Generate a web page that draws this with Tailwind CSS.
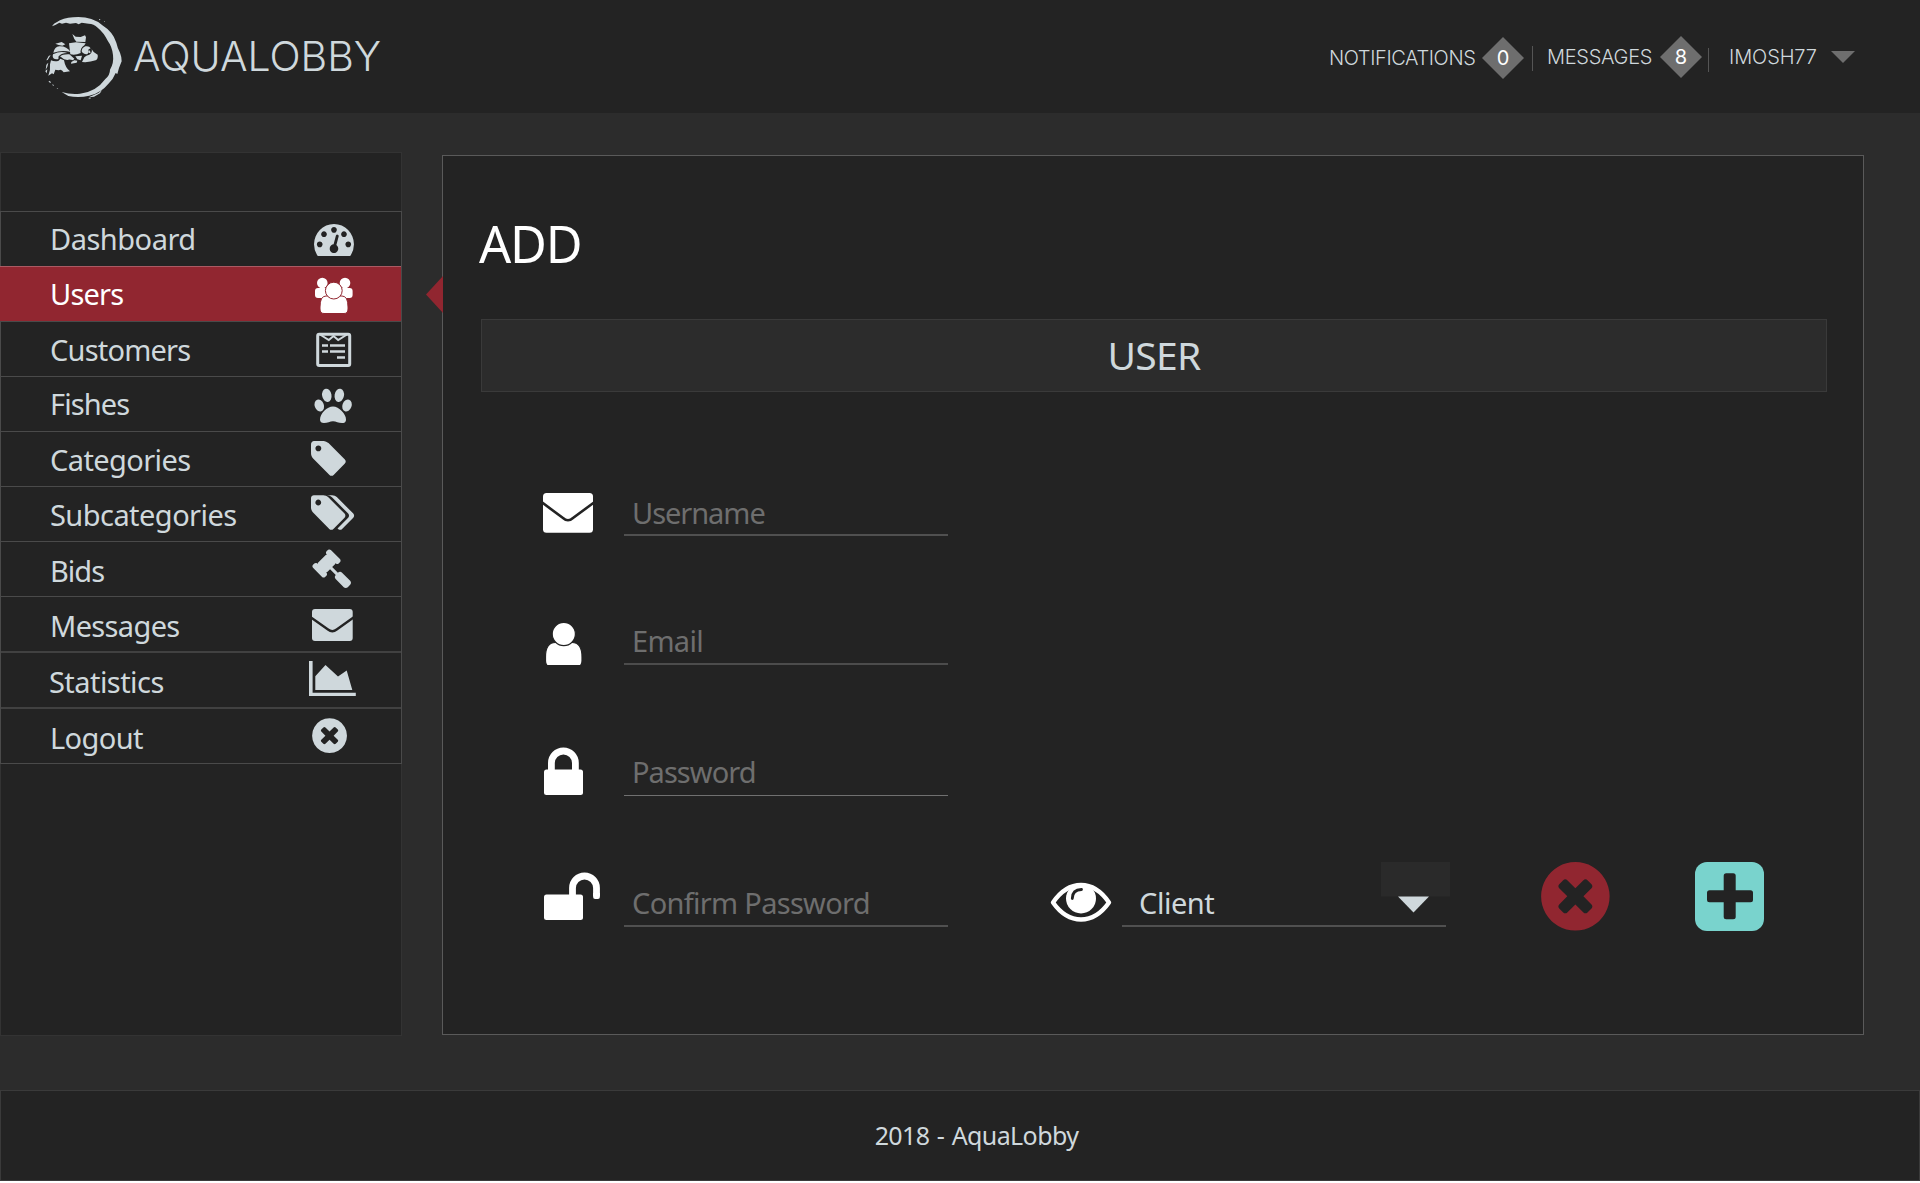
<!DOCTYPE html>
<html lang="en">
<head>
<meta charset="utf-8">
<title>AquaLobby</title>
<script src="https://cdn.jsdelivr.net/npm/@tailwindcss/browser@4"></script>
</head>
<body class="bg-white font-['Noto_Sans',sans-serif] text-[#cfd8dc]">
<div class="flex h-[1181px] w-[1920px] flex-col bg-[#2c2c2c]">

  <header class="flex h-[113px] shrink-0 items-center bg-[#232323] pl-[30px] font-['Inter',sans-serif]">
    <svg class="mt-0.5 h-[95px] w-[100px] shrink-0" viewBox="0 0 300 285" fill="#cfd8dc">
      <path d="M66 49L72 41L90 31Q112 21 145 21Q166 21 184 27Q203 33 217 46Q249 66 259 98Q263 116 270 128Q275 140 275 154L267 174L262 192L257 189Q249 208 238 218Q212 250 178 257Q146 265 115 258L95 246Q122 254 150 251Q198 246 226 207Q240 195 240 179Q252 160 249 135Q246 110 234 94Q222 68 203 53Q191 41 176 41L155 38L146 43L138 39L120 41L108 38L96 41L88 38L76 45Z"/>
      <path d="M176 262L205 249L216 240L210 250L192 260ZM174 264l10-1-4 3zM57 212l6 4-2 3-5-4zM67 222l5 4-3 2zM80 234l5 2-3 1zM208 27l3 1-1 3-3-2zM222 33l3 1-2 2z"/>
      <path d="M127 72L137 80L152 81L165 76L168 82L166 96L139 95L133 87Z"/>
      <path d="M117 100L138 97L167 100L163 106Q150 114 152 129Q136 137 121 133Z"/>
      <path d="M166 109Q155 114 155 124Q158 132 170 133Q176 132 174 124Q174 117 182 115Q178 107 166 109ZM185 118L191 126L203 134Q205 146 197 151Q178 158 156 156L163 142Q168 136 178 134Q188 128 185 118ZM178 121a4 4 0 1 0 4 6z"/>
      <path d="M76 101L95 96L106 103L97 107L86 105ZM70 128Q74 110 88 109Q110 108 122 126Q96 119 70 128ZM69 133Q92 121 112 129Q92 130 85 140Q88 149 79 148Q69 148 68 138ZM90 139Q98 132 118 133L133 146L129 151Q118 147 112 150L102 148ZM136 139L156 137L152 151L142 148ZM124 156L133 151L142 152L140 158L123 161Z"/>
      <path d="M63 151Q75 156 86 152L91 146L102 151Q106 174 120 184L101 187Q94 175 86 181L76 179L71 193L66 190L55 197Q62 178 60 163Z"/>
      <path d="M56 138L62 135L53 150L49 151ZM51 162L55 158L52 170L47 179L49 165ZM48 181L52 178L50 190L46 184Z"/>
    </svg>
    <span class="ml-[3px] mt-px w-[1196px] text-[41px] font-light">AQUALOBBY</span>
    <nav class="flex h-12 items-center text-xl font-[350]">
      <span class="mt-[3px] w-[153px] tracking-[-0.4px]">NOTIFICATIONS</span>
      <span class="relative mt-[3px] h-[42px] w-[42px] text-center font-normal leading-[43px] text-white">
        <svg class="absolute inset-0" width="42" height="42"><path d="M21 0L42 21L21 42L0 21Z" fill="#6e6e6e"/></svg>
        <span class="relative">0</span>
      </span>
      <i class="ml-2 mt-1 h-[25px] w-px bg-[#555]"></i>
      <span class="ml-[14px] mt-px w-[113px] tracking-[-0.3px]">MESSAGES</span>
      <span class="relative mt-px h-[42px] w-[42px] text-center font-normal leading-[43px] text-white">
        <svg class="absolute inset-0" width="42" height="42"><path d="M21 0L42 21L21 42L0 21Z" fill="#6e6e6e"/></svg>
        <span class="relative">8</span>
      </span>
      <i class="ml-[6px] mt-1.5 h-6 w-px bg-[#555]"></i>
      <span class="ml-5 mt-px w-[102px] tracking-[-0.1px]">IMOSH77</span>
      <svg width="24" height="12"><path d="M0 0H24L12 12Z" fill="#6e6e6e"/></svg>
    </nav>
  </header>

  <div class="flex h-[977px] shrink-0 items-start pt-[39px]">
    <aside class="h-[884px] w-[402px] shrink-0 border border-[#333] bg-[#232323] pt-[58px]">
      <ul class="-mx-px border-x border-b border-[#4a4a4a] text-[29px]">
        <li class="flex h-[55px] items-center border-t border-[#4a4a4a] pl-[49px]">
          <span class="w-64 tracking-[-0.5px]">Dashboard</span>
          <svg width="56" height="54" fill="#cfd8dc"><path transform="translate(8 6.2) scale(.0223 .0227)" d="M384 1152q0-53-37.5-90.5t-90.5-37.5-90.5 37.5-37.5 90.5 37.5 90.5 90.5 37.5 90.5-37.5 37.5-90.5zm192-448q0-53-37.5-90.5t-90.5-37.5-90.5 37.5-37.5 90.5 37.5 90.5 90.5 37.5 90.5-37.5 37.5-90.5zm428 481l101-382q6-26-7.5-48.5t-38.5-29.5-48 6.5-30 39.5l-101 382q-60 5-107 43.5t-63 98.5q-20 77 20 146t117 89 146-20 89-117q16-60-6-117t-72-91zm660-33q0-53-37.5-90.5t-90.5-37.5-90.5 37.5-37.5 90.5 37.5 90.5 90.5 37.5 90.5-37.5 37.5-90.5zm-640-640q0-53-37.5-90.5t-90.5-37.5-90.5 37.5-37.5 90.5 37.5 90.5 90.5 37.5 90.5-37.5 37.5-90.5zm448 192q0-53-37.5-90.5t-90.5-37.5-90.5 37.5-37.5 90.5 37.5 90.5 90.5 37.5 90.5-37.5 37.5-90.5zm320 448q0 261-141 483-19 29-54 29h-1402q-35 0-54-29-141-221-141-483 0-182 71-348t191-286 286-191 348-71 348 71 286 191 191 286 71 348z"/></svg>
        </li>
        <li class="-ml-px flex h-[55px] items-center border-t border-[#aa5a63] bg-[#912630] pl-[50px] text-white">
          <span class="w-64 tracking-[-0.8px]">Users</span>
          <svg width="56" height="54" fill="#fff" stroke="#912630"><g stroke="none"><circle cx="16.3" cy="16" r="5.3"/><circle cx="39" cy="16" r="5.3"/><path d="M9 24q0-3 3-3h10v10H12q-3 0-3-3zM46.6 24q0-3-3-3h-10v10h10q3 0 3-3z"/></g><path d="M14 40q0-11 6-11h16q6 0 6 11v2q0 4.500-4 4.500H18q-4 0-4-4.500z"/><circle cx="27.800" cy="23.600" r="8.400"/></svg>
        </li>
        <li class="flex h-[55px] items-center border-t border-[#4a4a4a] pl-[49px]">
          <span class="w-64 pt-0.5 tracking-[-0.8px]">Customers</span>
          <svg width="56" height="54" fill="none" stroke="#cfd8dc"><rect x="11.700" y="12.300" width="32" height="31.300" rx="1.500" stroke-width="3"/><path d="M14 12.500l8.800 5.500 4.700-4 4.700 4 8.800-5.500" stroke-width="2"/><path d="M16 23.500h6M24 23.500h15M16 29.500h6M24 29.500h15M31 35.500h8" stroke-width="2.700"/></svg>
        </li>
        <li class="flex h-[55px] items-center border-t border-[#4a4a4a] pl-[49px]">
          <span class="w-64 tracking-[-0.9px]">Fishes</span>
          <svg width="56" height="54" fill="#cfd8dc"><ellipse cx="20.800" cy="18.300" rx="4.700" ry="6.700" transform="rotate(-10 20.800 18.300)"/><ellipse cx="33.300" cy="18.300" rx="4.700" ry="6.700" transform="rotate(10 33.300 18.300)"/><ellipse cx="13.300" cy="28.500" rx="4.600" ry="6.200" transform="rotate(-20 13.300 28.500)"/><ellipse cx="41" cy="28.500" rx="4.600" ry="6.200" transform="rotate(20 41 28.500)"/><path d="M27 29.500c6 0 13 7.500 13 13 0 3-2 3.500-4 3.500-3.500 0-6-1.800-9-1.800s-5.500 1.800-9 1.800c-2.500 0-4-1-4-3.500 0-6 7-13 13-13z"/></svg>
        </li>
        <li class="flex h-[55px] items-center border-t border-[#4a4a4a] pl-[49px]">
          <span class="w-64 pt-0.5 tracking-[-0.6px]">Categories</span>
          <svg width="56" height="54" fill="#cfd8dc"><path transform="translate(2.100 6.100) scale(.0229)" d="M576 448q0-53-37.5-90.5t-90.5-37.5-90.5 37.5-37.5 90.5 37.5 90.5 90.5 37.5 90.5-37.5 37.5-90.5zm1067 576q0 53-37 90l-491 492q-39 37-91 37-53 0-90-37l-715-716q-38-37-64.500-101t-26.500-117v-416q0-52 38-90t90-38h416q53 0 117 26.500t102 64.500l715 714q37 39 37 91z"/></svg>
        </li>
        <li class="flex h-[55px] items-center border-t border-[#4a4a4a] pl-[49px]">
          <span class="w-64 pt-0.5 tracking-[-0.55px]">Subcategories</span>
          <svg width="56" height="54" fill="#cfd8dc"><path transform="translate(5 5.200) scale(.0227 .0229)" d="M448 448q0-53-37.5-90.5t-90.5-37.5-90.5 37.5-37.5 90.5 37.5 90.5 90.5 37.5 90.5-37.5 37.5-90.5zm1067 576q0 53-37 90l-491 492q-39 37-91 37-53 0-90-37l-715-716q-38-37-64.500-101t-26.500-117v-416q0-52 38-90t90-38h416q53 0 117 26.500t102 64.500l715 714q37 39 37 91zm384 0q0 53-37 90l-491 492q-39 37-91 37-36 0-59-14t-53-45l470-470q37-37 37-90 0-52-37-91l-715-714q-38-38-102-64.500t-117-26.500h224q53 0 117 26.500t102 64.500l715 714q37 39 37 91z"/></svg>
        </li>
        <li class="flex h-[55px] items-center border-t border-[#4a4a4a] pl-[49px]">
          <span class="w-64 pt-[3px] tracking-[-1px]">Bids</span>
          <svg width="56" height="54" fill="#cfd8dc"><path transform="translate(5.500 6.500) scale(.0223)" d="M1771 1536q0 53-37 90l-107 108q-39 37-91 37-53 0-90-37l-363-364q-38-36-38-90 0-53 43-96l-256-256-126 126q-14 14-34 14t-34-14q2 2 12.500 12t12.500 13 10 11.500 10 13.500 6 13.500 5.500 16.500 1.500 18q0 38-28 68-3 3-16.500 18t-19 20.500-18.500 16.500-22 15.500-22 9-26 4.500q-40 0-68-28l-408-408q-28-28-28-68 0-13 4.500-26t9-22 15.500-22 16.500-18.500 20.500-19 18-16.500q30-28 68-28 10 0 18 1.500t16.500 5.500 13.500 6 13.500 10 11.500 10 13 12.500 12 12.500q-14-14-14-34t14-34l348-348q14-14 34-14t34 14q-2-2-12.500-12t-12.500-13-10-11.500-10-13.500-6-13.500-5.500-16.500-1.500-18q0-38 28-68 3-3 16.500-18t19-20.500 18.500-16.500 22-15.500 22-9 26-4.500q40 0 68 28l408 408q28 28 28 68 0 13-4.500 26t-9 22-15.500 22-16.500 18.500-20.500 19-18 16.500q-30 28-68 28-10 0-18-1.500t-16.500-5.500-13.500-6-13.500-10-11.500-10-13-12.500-12-12.500q14 14 14 34t-14 34l-126 126 256 256q43-43 96-43 52 0 91 37l363 363q37 39 37 91z"/></svg>
        </li>
        <li class="flex h-[55px] items-center border-t border-[#4a4a4a] pl-[49px]">
          <span class="w-64 pt-[3px] tracking-[-0.65px]">Messages</span>
          <svg width="56" height="54" fill="#cfd8dc"><rect x="6" y="12" width="40.700" height="32" rx="3"/><path d="M5 20.500L22 32.500Q26.300 36 30.700 32.500L47.500 20.500" fill="none" stroke="#232323" stroke-width="2.300"/></svg>
        </li>
        <li class="flex h-14 items-center border-t-2 border-[#414141] pl-12">
          <span class="w-[257px] pt-[3px] tracking-[-0.55px]">Statistics</span>
          <svg width="56" height="54" fill="#cfd8dc"><path d="M3 8h3.600v31.800h43.200v3.200H3zM9.300 37V23.200L19.500 12 32 23.500l8.700-6L46.300 37z"/></svg>
        </li>
        <li class="flex h-14 items-center border-t-2 border-[#414141] pl-[49px]">
          <span class="w-64 pt-[3px] tracking-[-0.6px]">Logout</span>
          <svg width="56" height="54" fill="#cfd8dc"><path transform="translate(3.200 6.300) scale(.0227)" d="M1277 1122q0-26-19-45l-181-181 181-181q19-19 19-45 0-27-19-46l-90-90q-19-19-46-19-26 0-45 19l-181 181-181-181q-19-19-45-19-27 0-46 19l-90 90q-19 19-19 46 0 26 19 45l181 181-181 181q-19 19-19 45 0 27 19 46l90 90q19 19 46 19 26 0 45-19l181-181 181 181q19 19 45 19 27 0 46-19l90-90q19-19 19-46zm387-226q0 209-103 385.500t-279.500 279.500-385.500 103-385.500-103-279.500-279.500-103-385.500 103-385.500 279.500-279.500 385.500-103 385.500 103 279.500 279.500 103 385.500z"/></svg>
        </li>
      </ul>
    </aside>

    <main class="relative ml-10 mt-[3px] h-[880px] w-[1422px] shrink-0 border border-[#5a5a5a] bg-[#232323] pt-[58px]">
      <svg class="absolute -left-[17px] top-[120px]" width="17" height="37"><path d="M17 0V37L0 18.500Z" fill="#912630"/></svg>
      <h1 class="ml-9 h-[60px] text-[50.500px] leading-[60px] tracking-[-1.200px] text-white">ADD</h1>
      <h2 class="ml-[38px] mt-[45px] flex h-[73px] w-[1346px] items-center justify-center border border-[#3a3a3a] bg-[#2c2c2c] text-[39px] tracking-[-0.700px]">USER</h2>

      <form class="pl-[100px] text-[29px]">
        <div class="flex h-36 items-end">
          <svg class="shrink-0" width="81" height="72" fill="#fff"><rect x="0" y="29" width="50" height="39.800" rx="3.500"/><path d="M-1 38.500L20 54Q25 58.500 30 54L51 38.500" fill="none" stroke="#232323" stroke-width="2.600"/></svg>
          <input placeholder="Username" class="h-[45px] w-[324px] border-b-2 border-[#505050] pl-2 tracking-[-1.050px] outline-none placeholder:text-[#6e6e6e]">
        </div>
        <div class="flex h-[129px] items-end">
          <svg class="shrink-0" width="81" height="72" fill="#fff" stroke="#232323" stroke-width="1.200"><path d="M2.500 64q0-14.500 10-14.500h16.500q10 0 10 14.500v4q0 6-6 6H8.500q-6 0-6-6z"/><circle cx="20.800" cy="41" r="11.600"/></svg>
          <input placeholder="Email" class="h-[46px] w-[324px] border-b-2 border-[#4c4c4c] pb-0.5 pl-2 tracking-[-0.700px] outline-none placeholder:text-[#6e6e6e]">
        </div>
        <div class="flex h-[131px] items-end">
          <svg class="shrink-0" width="81" height="72"><rect x="1" y="45.500" width="39" height="25.500" rx="2.500" fill="#fff"/><path d="M8.400 47V39a12 12 0 0 1 24 0V47" fill="none" stroke="#fff" stroke-width="6.800"/></svg>
          <input placeholder="Password" class="h-[47px] w-[324px] border-b border-[#707070] pb-0.5 pl-2 tracking-[-0.950px] outline-none placeholder:text-[#6e6e6e]">
        </div>
        <div class="flex h-[131px] items-end">
          <svg class="shrink-0" width="81" height="72"><rect x="1" y="39.500" width="39" height="25.500" rx="2.500" fill="#fff"/><path d="M29.500 41V33a12 12 0 0 1 24 0V41" fill="none" stroke="#fff" stroke-width="6.800"/><path d="M50.100 38h6.800v4q0 2-2 2h-2.800q-2 0-2-2z" fill="#fff"/></svg>
          <input placeholder="Confirm Password" class="h-[46px] w-[324px] border-b-2 border-[#505050] pb-0.5 pl-2 tracking-[-0.700px] outline-none placeholder:text-[#6e6e6e]">
          <svg class="ml-[102px] shrink-0" width="72" height="72"><path d="M3 47.500Q15 30 31 30T59 47.500Q47 64.500 31 64.500T3 47.500Z" fill="none" stroke="#fff" stroke-width="4.400" stroke-linejoin="round"/><circle cx="31" cy="43.500" r="15" fill="#fff"/><path d="M22.300 43.500Q22.300 34.700 31.500 34.500" fill="none" stroke="#232323" stroke-width="2.800" stroke-linecap="round"/></svg>
          <div class="relative flex h-[46px] w-[324px] items-center border-b-2 border-[#505050] pl-[17px] tracking-[-0.450px]">Client
            <svg class="absolute -top-[19px] left-[259px]" width="69" height="52"><path d="M0 0h69v34.500H0z" fill="#2a2a2a"/><path d="M17 34.500H48L32.500 50.500Z" fill="#cfd8dc"/></svg>
          </div>
          <svg class="-mb-1 ml-[95px] shrink-0" width="69" height="69" fill="#912630"><path transform="translate(-5.600 -5.600) scale(.0446)" d="M1277 1122q0-26-19-45l-181-181 181-181q19-19 19-45 0-27-19-46l-90-90q-19-19-46-19-26 0-45 19l-181 181-181-181q-19-19-45-19-27 0-46 19l-90 90q-19 19-19 46 0 26 19 45l181 181-181 181q-19 19-19 45 0 27 19 46l90 90q19 19 46 19 26 0 45-19l181-181 181 181q19 19 45 19 27 0 46-19l90-90q19-19 19-46zm387-226q0 209-103 385.500t-279.500 279.500-385.500 103-385.500-103-279.500-279.500-103-385.500 103-385.500 279.500-279.500 385.500-103 385.500 103 279.500 279.500 103 385.500z"/></svg>
          <svg class="-mb-1 ml-[85px] shrink-0" width="69" height="69"><rect width="69" height="69" rx="12" fill="#79d3cd"/><rect x="28.700" y="11.300" width="12" height="46" rx="2.500" fill="#232323"/><rect x="12" y="28.300" width="46" height="12" rx="2.500" fill="#232323"/></svg>
        </div>
      </form>
    </main>
  </div>

  <footer class="flex h-[91px] shrink-0 items-center justify-center border border-[#3a3a3a] bg-[#232323] pl-[33px] text-[25px] tracking-[-0.600px] [word-spacing:1.500px]">2018 - AquaLobby</footer>
</div>
</body>
</html>
